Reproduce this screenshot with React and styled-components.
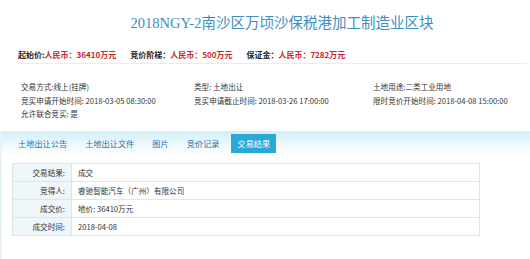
import React from 'react';
import styled, { createGlobalStyle } from 'styled-components';

const GlobalStyle = createGlobalStyle`
html, body {
  margin: 0;
  padding: 0;
  background: #ffffff;
}
body {
  font-family: "Noto Sans CJK SC", "Noto Sans", sans-serif;
  color: #333333;
}
`

const Page = styled.div`
width: 530px;
height: 259px;
overflow: hidden;
`

const Title = styled.h1`
margin: 0;
padding-top: 14px;
height: 34px;
box-sizing: border-box;
text-align: center;
font-family: "Liberation Serif", "Noto Sans CJK SC", serif;
font-size: 14.5px;
line-height: 18px;
font-weight: normal;
color: #3b8ec2;
padding-left: 34px;
`

const PriceBar = styled.div`
margin: 15px 3px 0 18px;
height: 15px;
box-sizing: border-box;
border-bottom: 1px solid #ebebf0;
display: flex;
gap: 14px;
font-size: 8px;
line-height: 12px;
font-weight: bold;
`

const PriceItem = styled.span`
color: #222222;
`

const PriceValue = styled.span`
color: #c8242b;
`

const InfoGrid = styled.div`
display: grid;
grid-template-columns: 173px 179px 1fr;
grid-auto-rows: 13.5px;
padding: 16px 0 0 21px;
height: 64px;
box-sizing: border-box;
font-size: 7.6px;
line-height: 13.5px;
color: #333333;
white-space: nowrap;
`

const Panel = styled.div`
border-left: 2px solid #e6f3f8;
margin-top: 3px;
height: 130px;
`

const TabBar = styled.div`
height: 22px;
padding: 2px 0 0 10px;
display: flex;
align-items: flex-start;
background: linear-gradient(to bottom, #d2eff9 0%, #eaf8fc 45%, #ffffff 100%);
border-top: 1px solid #d8f1f9;
`

const Tab = styled.div`
height: 19px;
padding: 0 6px;
margin-right: 6px;
font-size: 8.2px;
line-height: 19px;
white-space: nowrap;
color: ${p => (p.$active ? '#ffffff' : '#2b6ea6')};
background: ${p => (p.$active ? '#2aa8d8' : 'transparent')};
`

const Table = styled.div`
margin: 7px 0 0 10px;
width: 466px;
border: 1px solid #e3e3e6;
border-bottom: none;
`

const Row = styled.div`
display: grid;
grid-template-columns: 59px 1fr;
height: 18px;
box-sizing: border-box;
border-bottom: 1px solid #e3e3e6;
font-size: 7.6px;
line-height: 17px;
`

const Label = styled.div`
background: #eff6f9;
border-right: 1px solid #e3e3e6;
text-align: right;
padding-right: 6px;
color: #333333;
`

const Value = styled.div`
padding-left: 6px;
color: #333333;
`

const info = [
  '交易方式:线上(挂牌)', '类型: 土地出让', '土地用途:二类工业用地',
  '竞买申请开始时间: 2018-03-05 08:30:00', '竞买申请截止时间: 2018-03-26 17:00:00', '限时竞价开始时间: 2018-04-08 15:00:00',
  '允许联合竞买: 是'
]

const result = [
  ['交易结果:', '成交'],
  ['竞得人:', '睿驰智能汽车（广州）有限公司'],
  ['成交价:', '地价: 36410万元'],
  ['成交时间:', '2018-04-08']
]

export default function App() {
  return (
    <Page>
      <GlobalStyle />
      <Title>2018NGY-2南沙区万顷沙保税港加工制造业区块</Title>

      <PriceBar>
        <PriceItem>起始价:<PriceValue>人民币：36410万元</PriceValue></PriceItem>
        <PriceItem>竞价阶梯：<PriceValue>人民币：500万元</PriceValue></PriceItem>
        <PriceItem>保证金：<PriceValue>人民币：7282万元</PriceValue></PriceItem>
      </PriceBar>

      <InfoGrid>
        {info.map((t, i) => <div key={i}>{t}</div>)}
      </InfoGrid>

      <Panel>
        <TabBar>
          <Tab>土地出让公告</Tab>
          <Tab>土地出让文件</Tab>
          <Tab>图片</Tab>
          <Tab>竞价记录</Tab>
          <Tab $active>交易结果</Tab>
        </TabBar>

        <Table>
          {result.map(([k, v]) => (
            <Row key={k}>
              <Label>{k}</Label>
              <Value>{v}</Value>
            </Row>
          ))}
        </Table>
      </Panel>
    </Page>
  );
}
